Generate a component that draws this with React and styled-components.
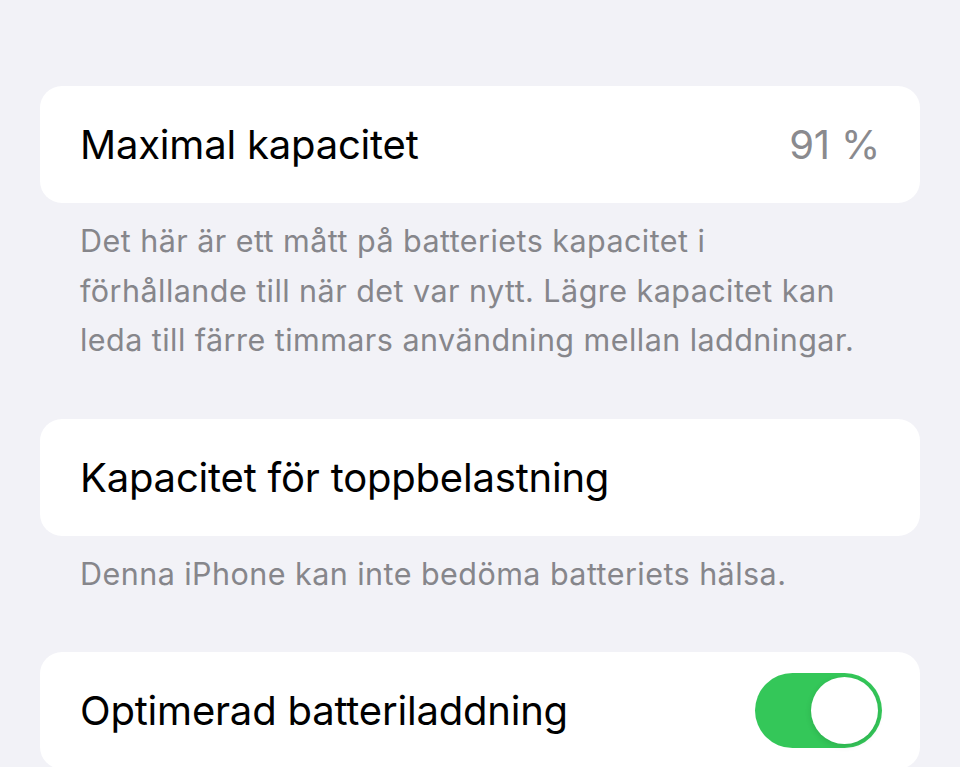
import React from 'react'
import styled, { createGlobalStyle } from 'styled-components'

const Global = createGlobalStyle`
  html, body {
    margin: 0;
    padding: 0;
    background: #f2f2f7;
  }
  body {
    font-family: Inter, "Noto Sans", "Liberation Sans", sans-serif;
    -webkit-font-smoothing: antialiased;
  }
`

export default function App() {
  return (
    <>
      <Global />
      <Page>
        <Card>
          <Label>Maximal kapacitet</Label>
          <Value>91 %</Value>
        </Card>
        <Footer>
          Det här är ett mått på batteriets kapacitet i förhållande till när det var nytt. Lägre kapacitet kan leda till färre timmars användning mellan laddningar.
        </Footer>
        <Card>
          <Label>Kapacitet för toppbelastning</Label>
        </Card>
        <Footer>Denna iPhone kan inte bedöma batteriets hälsa.</Footer>
        <Card>
          <Label>Optimerad batteriladdning</Label>
          <Toggle on />
        </Card>
      </Page>
    </>
  )
}

function Toggle({ on }) {
  return (
    <Track $on={on}>
      <Knob />
    </Track>
  )
}

const Page = styled.div`
  padding: 86px 40px 0;
  height: 767px;
  box-sizing: border-box;
  overflow: hidden;
`
const Card = styled.div`
  background: #fff;
  border-radius: 22px;
  height: 117px;
  padding: 0 40px;
  display: flex;
  align-items: center;
  justify-content: space-between;
  box-sizing: border-box;
`
const Label = styled.span`
  font-size: 40px;
  letter-spacing: -0.2px;
  color: #000;
`
const Value = styled.span`
  font-size: 40px;
  letter-spacing: -0.2px;
  color: #8a8a8e;
`
const Footer = styled.p`
  margin: 0;
  padding: 13px 40px 54px;
  font-size: 30.5px;
  line-height: 49.5px;
  color: #86868b;
  letter-spacing: 0.45px;
`
const Track = styled.div`
  width: 127px;
  height: 75px;
  margin-right: -2px;
  border-radius: 38px;
  background: ${p => (p.$on ? '#34c759' : '#e9e9eb')};
  display: flex;
  align-items: center;
  justify-content: ${p => (p.$on ? 'flex-end' : 'flex-start')};
  padding: 0 4px;
  box-sizing: border-box;
`
const Knob = styled.div`
  width: 67px;
  height: 67px;
  border-radius: 50%;
  background: #fff;
  box-shadow: 0 2px 6px rgba(0,0,0,0.12);
`
